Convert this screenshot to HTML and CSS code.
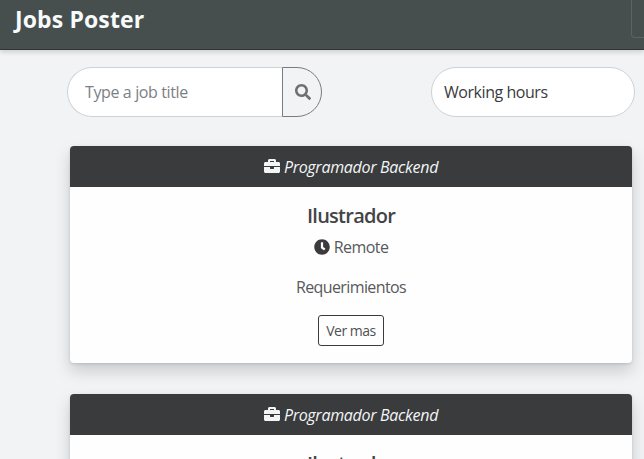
FILE: index.html
```html
<!DOCTYPE html>
<html lang="en">
<head>
<meta charset="utf-8">
<title>Jobs Poster</title>
<link rel="stylesheet" href="styles.css">
</head>
<body>
<svg class="sprite" aria-hidden="true">
  <symbol id="briefcase" viewBox="0 0 512 512"><path d="M320 336c0 8.840-7.160 16-16 16h-96c-8.840 0-16-7.160-16-16v-48H0v144c0 25.600 22.400 48 48 48h416c25.600 0 48-22.400 48-48V288H320v48zm144-208h-80V80c0-25.600-22.400-48-48-48H176c-25.600 0-48 22.400-48 48v48H48c-25.600 0-48 22.400-48 48v80h512v-80c0-25.600-22.400-48-48-48zm-144 0H192V96h128v32z"/></symbol>
  <symbol id="clock" viewBox="0 0 512 512"><path d="M256 8C119 8 8 119 8 256s111 248 248 248 248-111 248-248S393 8 256 8zm57.100 350.100L224.900 294c-3.100-2.300-4.900-5.900-4.900-9.700V116c0-6.600 5.400-12 12-12h48c6.600 0 12 5.400 12 12v137.700l63.500 46.200c5.400 3.900 6.500 11.400 2.600 16.800l-28.200 38.800c-3.900 5.300-11.400 6.500-16.800 2.600z"/></symbol>
  <symbol id="search" viewBox="0 0 512 512"><path d="M505 442.700L405.300 343c-4.500-4.500-10.600-7-17-7H372c27.600-35.300 44-79.700 44-128C416 93.100 322.900 0 208 0S0 93.100 0 208s93.100 208 208 208c48.300 0 92.700-16.400 128-44v16.300c0 6.400 2.500 12.500 7 17l99.700 99.700c9.400 9.400 24.600 9.400 33.900 0l28.300-28.300c9.400-9.400 9.400-24.600.1-34zM208 336c-70.700 0-128-57.200-128-128 0-70.700 57.200-128 128-128 70.700 0 128 57.200 128 128 0 70.700-57.200 128-128 128z"/></symbol>
</svg>
<header class="navbar">
  <a class="brand">Jobs Poster</a>
  <button class="toggler" aria-label="Menu"></button>
</header>
<main>
  <form class="filters">
    <div class="search">
      <input type="text" placeholder="Type a job title" aria-label="Job title">
      <button type="button" aria-label="Search"><svg class="icon"><use href="#search"/></svg></button>
    </div>
    <div class="hours">Working hours</div>
  </form>
  <article class="card">
    <div class="card-header"><svg class="icon"><use href="#briefcase"/></svg><em>Programador Backend</em></div>
    <div class="card-body">
      <h2>Ilustrador</h2>
      <p class="place"><svg class="icon"><use href="#clock"/></svg><span>Remote</span></p>
      <p class="requirements">Requerimientos</p>
      <button class="more">Ver mas</button>
    </div>
  </article>
  <article class="card">
    <div class="card-header"><svg class="icon"><use href="#briefcase"/></svg><em>Programador Backend</em></div>
    <div class="card-body">
      <h2>Ilustrador</h2>
    </div>
  </article>
</main>
</body>
</html>
```
FILE: styles.css
```css
* { box-sizing: border-box; }
html { height: 100%; overflow: hidden; }
body {
  margin: 0;
  height: 100%;
  overflow: hidden;
  background: #f1f3f5;
  color: #3a3b3d;
  font: 16px/24px "Open Sans", "Noto Sans", sans-serif;
}
.sprite { display: none; }
.icon { display: block; width: 16px; height: 16px; fill: currentColor; flex: none; }
button, input { font: inherit; }
.navbar {
  display: flex;
  justify-content: space-between;
  height: 50px;
  padding-left: 15px;
  background: #474f4e;
  border-bottom: 1px solid #303635;
  box-shadow: 0 2px 5px rgba(0, 20, 20, .16);
}
.brand {
  height: 40px;
  line-height: 39px;
  color: #f8fbfb;
  font-size: 23px;
  font-weight: 700;
  letter-spacing: .12px;
}
.toggler {
  width: 13px;
  height: 38px;
  background: none;
  border: 1px solid #5c6362;
  border-width: 0 0 1px 1px;
  border-radius: 0 0 0 4px;
  flex: none;
}
main { padding: 17px 12px 0 67px; }
.filters {
  display: flex;
  justify-content: space-between;
  margin: 0 -3px 29px 0;
}
.search { display: flex; width: 255px; height: 50px; }
.search input {
  width: 215px;
  padding: 0 17px;
  background: #fff;
  border: 1px solid #ced2d5;
  border-right: 0;
  border-radius: 25px 0 0 25px;
  letter-spacing: -.38px;
}
.search input::placeholder { color: #7c8084; opacity: 1; }
.search button {
  display: flex;
  align-items: center;
  justify-content: center;
  width: 40px;
  padding: 0 0 0 2px;
  color: #6c7073;
  background: transparent;
  border: 1px solid #787c7f;
  border-radius: 0 25px 25px 0;
}
.hours {
  width: 204px;
  height: 50px;
  padding-left: 12px;
  line-height: 49px;
  background: #fff;
  border: 1px solid #ced2d5;
  border-radius: 25px;
  letter-spacing: -.45px;
}
.card {
  height: 217px;
  margin: 0 0 31px 3px;
  background: #fefefe;
  border-radius: 4px;
  box-shadow: 0 8px 16px rgba(0, 0, 0, .17), 0 1px 3px rgba(0, 0, 0, .12);
}
.card-header {
  display: flex;
  align-items: center;
  justify-content: center;
  gap: 4px;
  height: 41px;
  color: #f2f5f6;
  background: #3a3b3d;
  border-radius: 4px 4px 0 0;
}
.card-header em { font-weight: 500; letter-spacing: -.3px; }
.card-header .icon { margin-top: -2px; }
.card-body { text-align: center; padding-top: 17px; }
h2 {
  margin: 0 0 7px;
  color: #434446;
  font-size: 20px;
  line-height: 24px;
  font-weight: 600;
  letter-spacing: -.75px;
}
p { margin: 0; }
.place { display: flex; align-items: center; justify-content: center; gap: 4px; margin-bottom: 16px; letter-spacing: -.55px; }
.place span, .requirements { color: #58595b; }
.requirements { letter-spacing: -.6px; }
.more {
  display: block;
  width: 66px;
  height: 31px;
  margin: 16px auto 0;
  padding: 0;
  color: #505153;
  background: transparent;
  border: 1px solid #3a3b3d;
  border-radius: 3px;
  font-size: 14px;
  line-height: 21px;
  letter-spacing: -.5px;
}
```
